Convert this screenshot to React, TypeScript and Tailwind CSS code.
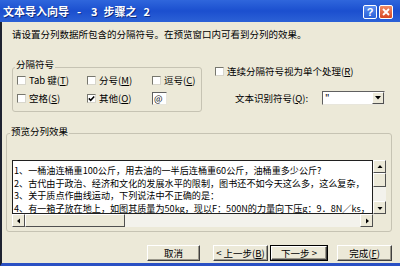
import React from 'react';

// 小复选框
const Check = ({ checked }: { checked?: boolean }) => (
  <span className="w-[9px] h-[9px] shrink-0 bg-white border border-t-[#77776e] border-l-[#77776e] border-r-[#d8d6cc] border-b-[#d8d6cc] flex items-center justify-center">
    {checked && (
      <svg width="7" height="7" viewBox="0 0 7 7">
        <path d="M0.8 3.4 L2.7 5.3 L6.2 1.4" stroke="#000" strokeWidth="1.5" fill="none" />
      </svg>
    )}
  </span>
);

const Opt = ({ text, k, checked }: { text: string; k: string; checked?: boolean }) => (
  <div className="flex items-center h-[12px]">
    <Check checked={checked} />
    <span className="ml-[3px] whitespace-nowrap">
      {text}(<u>{k}</u>)
    </span>
  </div>
);

const Btn = ({ children, w, isDefault }: { children: React.ReactNode; w: string; isDefault?: boolean }) => (
  <div
    className={
      isDefault
        ? `${w} h-[16px] border border-black flex`
        : `${w} h-[16px] flex`
    }
  >
    <div className="flex-1 bg-[#ece9d8] border border-t-white border-l-white border-r-[#404040] border-b-[#404040] shadow-[inset_-1px_-1px_0_#9a978a] flex items-center justify-center whitespace-nowrap">
      {children}
    </div>
  </div>
);

const ScrollArrow = ({ dir }: { dir: 'up' | 'down' | 'left' | 'right' }) => {
  const pts = {
    up: '1.5,5 4,2 6.5,5',
    down: '1.5,3 4,6 6.5,3',
    left: '5,1.5 2,4 5,6.5',
    right: '3,1.5 6,4 3,6.5',
  }[dir];
  return (
    <div className="w-[13px] h-[13px] shrink-0 bg-[#ece9d8] border border-t-white border-l-white border-r-[#505050] border-b-[#505050] flex items-center justify-center">
      <svg width="8" height="8" viewBox="0 0 8 8">
        <polygon points={pts} fill="#000" />
      </svg>
    </div>
  );
};

const lines = [
  '1、一桶油连桶重100公斤，用去油的一半后连桶重60公斤，油桶重多少公斤?',
  '2、古代由于政治、经济和文化的发展水平的限制，图书还不如今天这么多，这么复杂，',
  '3、关于质点作曲线运动，下列说法中不正确的是：',
  '4、有一箱子放在地上，如图其质量为50kg，现以F：500N的力量向下压g：9．8N／ks，',
];

export default function App() {
  return (
    <div className="w-[400px] h-[266px] overflow-hidden flex flex-col font-['Noto_Sans_CJK_SC','Liberation_Sans',sans-serif] text-[9.5px] text-black">
      {/* 标题栏 */}
      <div className="h-[22px] shrink-0 bg-gradient-to-b from-[#2f66dc] via-[#1b4fcf] to-[#2c61d6] flex items-center justify-between pl-[3px] pr-[7px]">
        <div className="flex items-center text-white font-bold text-[11px] leading-[12px] whitespace-nowrap [text-shadow:1px_1px_0_#0c2a80]">
          <span>文本导入向导</span>
          <span className="ml-[8px]">-</span>
          <span className="ml-[10px]">3</span>
          <span className="ml-[6px]">步骤之</span>
          <span className="ml-[7px]">2</span>
        </div>
        <div className="flex items-center gap-[2px] mt-[2px]">
          <div className="w-[14px] h-[14px] rounded-[2px] border border-white bg-gradient-to-b from-[#5a8df0] to-[#2a5fd8] text-white text-[11px] font-bold leading-none flex items-center justify-center font-['Liberation_Sans',sans-serif]">
            ?
          </div>
          <div className="w-[14px] h-[14px] rounded-[2px] border border-white bg-gradient-to-b from-[#f08a64] to-[#d8461f] flex items-center justify-center">
            <svg width="8" height="8" viewBox="0 0 8 8">
              <path d="M1 1 L7 7 M7 1 L1 7" stroke="#fff" strokeWidth="1.8" />
            </svg>
          </div>
        </div>
      </div>

      {/* 主体 */}
      <div className="flex-1 bg-[#ece9d8] border-l-2 border-l-[#1d2230] border-b-[3px] border-b-[#2a50c4] flex flex-col">
        <div className="pt-[6px] pl-[10px] leading-[12px] whitespace-nowrap">
          请设置分列数据所包含的分隔符号。在预览窗口内可看到分列的效果。
        </div>

        <div className="mt-[27px] flex items-start">
          {/* 分隔符号 */}
          <div className="relative ml-[10px] w-[190px] h-[45px] border border-[#c6c3b3] rounded-[3px] pl-[4px] pt-[6px]">
            <span className="absolute -top-[10px] left-[2px] px-[1px] bg-[#ece9d8] leading-[12px]">分隔符号</span>
            <div className="flex items-center">
              <div className="w-[70px]">
                <Opt text="Tab 键" k="T" />
              </div>
              <div className="w-[65px]">
                <Opt text="分号" k="M" />
              </div>
              <Opt text="逗号" k="C" />
            </div>
            <div className="flex items-center mt-[5px] h-[14px]">
              <div className="w-[70px]">
                <Opt text="空格" k="S" />
              </div>
              <div className="w-[65px]">
                <Opt text="其他" k="O" checked />
              </div>
              <div className="w-[15px] h-[13px] bg-white border border-t-[#606060] border-l-[#606060] border-r-[#e8e6dc] border-b-[#e8e6dc] leading-[11px] pl-[1px] text-[9px]">
                @
              </div>
            </div>
          </div>

          {/* 右侧选项 */}
          <div className="ml-[13px] -mt-[2px] flex flex-col">
            <Opt text="连续分隔符号视为单个处理" k="R" />
            <div className="mt-[14px] h-[14px] flex items-center pl-[20px]">
              <span className="w-[87px] whitespace-nowrap">
                文本识别符号(<u>Q</u>):
              </span>
              <div className="w-[63px] h-[14px] bg-white border border-t-[#606060] border-l-[#606060] border-r-[#e8e6dc] border-b-[#e8e6dc] flex">
                <span className="flex-1 pl-[2px] leading-[10px]">"</span>
                <div className="w-[12px] h-full bg-[#ece9d8] border border-t-white border-l-white border-r-[#505050] border-b-[#505050] flex items-center justify-center">
                  <svg width="6" height="4" viewBox="0 0 6 4">
                    <polygon points="0,0 6,0 3,3.5" fill="#000" />
                  </svg>
                </div>
              </div>
            </div>
          </div>
        </div>

        {/* 预览分列效果 */}
        <div className="relative ml-[4px] mt-[21px] w-[386px] h-[99px] border border-[#c6c3b3] rounded-[3px] pl-[5px] pt-[26px]">
          <span className="absolute -top-[9px] left-[3px] px-[1px] bg-[#ece9d8] leading-[12px]">预览分列效果</span>
          <div className="flex">
            <div className="w-[361px] h-[54px] bg-white border border-[#202020] overflow-hidden pt-[3px] pl-[1px] text-[9.1px]">
              {lines.map((l) => (
                <div key={l} className="leading-[12.5px] whitespace-nowrap">
                  {l}
                </div>
              ))}
            </div>
            <div className="w-[13px] h-[54px] bg-[#f3f2ec] flex flex-col">
              <ScrollArrow dir="up" />
              <div className="w-[13px] h-[14px] bg-[#ece9d8] border border-t-white border-l-white border-r-[#505050] border-b-[#505050]" />
              <div className="flex-1" />
              <ScrollArrow dir="down" />
            </div>
          </div>
          <div className="flex">
            <div className="w-[361px] h-[13px] bg-[#f3f2ec] flex">
              <ScrollArrow dir="left" />
              <div className="w-[100px] h-[13px] bg-[#ece9d8] border border-t-white border-l-white border-r-[#505050] border-b-[#505050]" />
              <div className="flex-1" />
              <ScrollArrow dir="right" />
            </div>
            <div className="w-[13px] h-[13px] bg-[#ece9d8]" />
          </div>
        </div>

        {/* 按钮 */}
        <div className="mt-[13px] flex justify-end pr-[8px]">
          <Btn w="w-[53px]">取消</Btn>
          <div className="ml-[13px]">
            <Btn w="w-[55px]">
              &lt; 上一步(<u>B</u>)
            </Btn>
          </div>
          <div className="ml-[2px]">
            <Btn w="w-[58px]" isDefault>
              下一步 &gt;
            </Btn>
          </div>
          <div className="ml-[9px]">
            <Btn w="w-[55px]">
              完成(<u>F</u>)
            </Btn>
          </div>
        </div>
      </div>
    </div>
  );
}
